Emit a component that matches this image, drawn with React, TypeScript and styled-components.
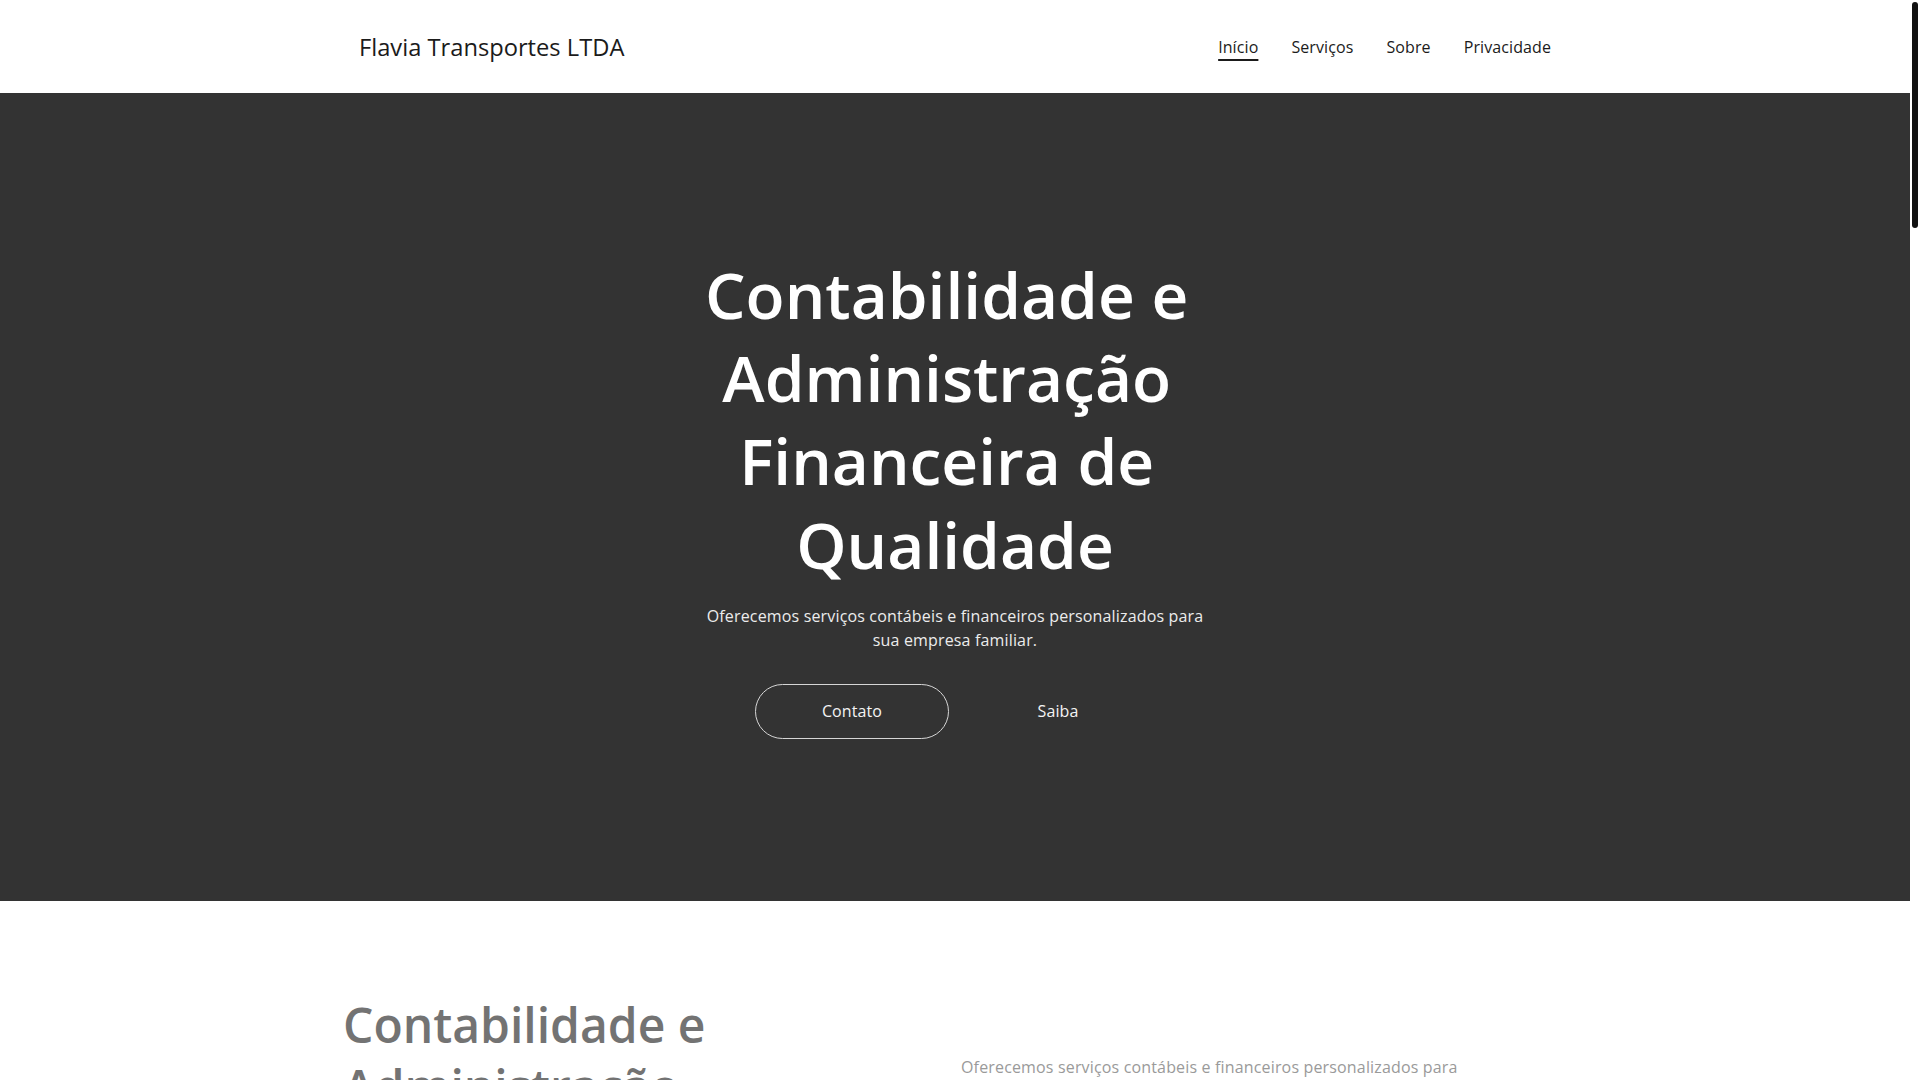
import React from "react";
import styled, { createGlobalStyle } from "styled-components";

const GlobalStyle = createGlobalStyle`
  *, *::before, *::after { box-sizing: border-box; }
  html, body { height: 100%; overflow: hidden; }
  body {
    margin: 0;
    background: #ffffff;
    color: #1b1b1b;
    font-family: "Open Sans", "Noto Sans", "Liberation Sans", sans-serif;
  }
  h1, h2, h3, p { margin: 0; }
`;

const Shell = styled.div`
  height: 100vh;
  display: flex;
`;

const Viewport = styled.div`
  flex: 1;
  min-width: 0;
  overflow-y: auto;
  background: #ffffff;
  scrollbar-width: none;
  &::-webkit-scrollbar { display: none; }
`;

const ScrollRail = styled.div`
  width: 10px;
  flex: none;
  padding: 2px;
  background: #ffffff;
`;

const ScrollThumb = styled.div`
  width: 6px;
  height: 226px;
  border-radius: 3px;
  background: #111111;
`;

const Page = styled.div`
  min-height: 5071px;
  display: flex;
  flex-direction: column;
`;

const Container = styled.div`
  width: 1224px;
  margin: 0 auto;
`;

const Header = styled.header`
  height: 93px;
  background: #ffffff;
`;

const HeaderInner = styled(Container)`
  height: 100%;
  padding: 0 16px;
  display: flex;
  align-items: center;
  justify-content: space-between;
`;

const Logo = styled.a`
  font-size: 23.7px;
  font-weight: 400;
  color: #1b1b1b;
  text-decoration: none;
`;

const Nav = styled.nav`
  display: flex;
  gap: 33px;
`;

const NavLink = styled.a<{ $active?: boolean }>`
  font-size: 16px;
  color: #1b1b1b;
  text-decoration: ${(p) => (p.$active ? "underline" : "none")};
  text-decoration-thickness: 2px;
  text-underline-offset: 6px;
  letter-spacing: 0.1px;
`;

const Hero = styled.section`
  background: #333333;
  padding: 160px 0 162px;
  display: flex;
  flex-direction: column;
  align-items: center;
`;

const HeroTitle = styled.h1`
  max-width: 520px;
  font-size: 64px;
  line-height: 1.3;
  font-weight: 600;
  color: #ffffff;
  text-align: center;
  white-space: break-spaces;
`;

const HeroText = styled.p`
  max-width: 520px;
  margin-top: 18px;
  font-size: 16px;
  line-height: 24px;
  letter-spacing: 0.16px;
  color: #ececec;
  text-align: center;
`;

const ButtonRow = styled.div`
  margin-top: 32px;
  display: flex;
  gap: 12px;
`;

const Button = styled.a<{ $outline?: boolean }>`
  width: 194px;
  height: 55px;
  display: flex;
  align-items: center;
  justify-content: center;
  border-radius: 28px;
  border: 1px solid ${(p) => (p.$outline ? "#d6d6d6" : "transparent")};
  color: #f4f4f4;
  font-size: 16px;
  letter-spacing: 0.1px;
  text-decoration: none;
`;

const Intro = styled.section`
  padding: 93px 0 93px;
`;

const IntroGrid = styled(Container)`
  display: grid;
  grid-template-columns: 1fr 1fr;
  gap: 12px;
  align-items: start;
`;

const SectionTitle = styled.h2`
  max-width: 520px;
  font-size: 48px;
  line-height: 1.3;
  font-weight: 600;
  color: #737373;
`;

const IntroText = styled.p`
  max-width: 520px;
  margin-top: 61px;
  font-size: 16px;
  line-height: 24px;
  letter-spacing: 0.16px;
  color: #9a9a9a;
`;

const Block = styled.section<{ $tone?: "light" | "white" }>`
  padding: 110px 0;
  background: ${(p) => (p.$tone === "light" ? "#f5f5f5" : "#ffffff")};
`;

const BlockHeading = styled.h2`
  font-size: 40px;
  line-height: 1.3;
  font-weight: 600;
  color: #333333;
  text-align: center;
  margin-bottom: 56px;
`;

const CardGrid = styled(Container)`
  display: grid;
  grid-template-columns: repeat(3, 1fr);
  gap: 32px;
`;

const Card = styled.div`
  background: #ffffff;
  border: 1px solid #e4e4e4;
  border-radius: 8px;
  padding: 40px 32px;
  min-height: 280px;
`;

const CardTitle = styled.h3`
  font-size: 22px;
  font-weight: 600;
  color: #333333;
  margin-bottom: 16px;
`;

const CardText = styled.p`
  font-size: 16px;
  line-height: 26px;
  color: #6f6f6f;
`;

const Prose = styled(Container)`
  max-width: 820px;
  display: flex;
  flex-direction: column;
  gap: 24px;
`;

const ProseText = styled.p`
  font-size: 17px;
  line-height: 28px;
  color: #5c5c5c;
`;

const Footer = styled.footer`
  margin-top: auto;
  background: #333333;
  padding: 48px 0;
`;

const FooterInner = styled(Container)`
  padding: 0 16px;
  display: flex;
  justify-content: space-between;
  color: #cfcfcf;
  font-size: 15px;
`;

const services = [
  {
    title: "Contabilidade Empresarial",
    text: "Escrituração contábil, balanços e demonstrativos elaborados com precisão para manter sua empresa em dia.",
  },
  {
    title: "Gestão Financeira",
    text: "Planejamento de fluxo de caixa, controle de custos e relatórios claros para decisões mais seguras.",
  },
  {
    title: "Consultoria Fiscal",
    text: "Apuração de impostos e orientação tributária para reduzir riscos e aproveitar oportunidades legais.",
  },
];

export default function App() {
  return (
    <>
      <GlobalStyle />
      <Shell>
        <Viewport>
          <Page>
            <Header>
              <HeaderInner>
                <Logo href="#">Flavia Transportes LTDA</Logo>
                <Nav>
                  <NavLink href="#" $active>
                    Início
                  </NavLink>
                  <NavLink href="#">Serviços</NavLink>
                  <NavLink href="#">Sobre</NavLink>
                  <NavLink href="#">Privacidade</NavLink>
                </Nav>
              </HeaderInner>
            </Header>

            <Hero>
              <HeroTitle>Contabilidade e Administração Financeira de Qualidade</HeroTitle>
              <HeroText>
                Oferecemos serviços contábeis e financeiros personalizados para sua empresa familiar.
              </HeroText>
              <ButtonRow>
                <Button href="#" $outline>
                  Contato
                </Button>
                <Button href="#">Saiba</Button>
              </ButtonRow>
            </Hero>

            <Intro>
              <IntroGrid>
                <SectionTitle>Contabilidade e Administração Financeira de Qualidade</SectionTitle>
                <IntroText>
                  Oferecemos serviços contábeis e financeiros personalizados para sua empresa familiar.
                </IntroText>
              </IntroGrid>
            </Intro>

            <Block $tone="light">
              <BlockHeading>Serviços</BlockHeading>
              <CardGrid>
                {services.map((s) => (
                  <Card key={s.title}>
                    <CardTitle>{s.title}</CardTitle>
                    <CardText>{s.text}</CardText>
                  </Card>
                ))}
              </CardGrid>
            </Block>

            <Block>
              <BlockHeading>Sobre</BlockHeading>
              <Prose>
                <ProseText>
                  A Flavia Transportes LTDA atua com dedicação no atendimento a empresas familiares,
                  oferecendo soluções contábeis e financeiras sob medida.
                </ProseText>
                <ProseText>
                  Nosso compromisso é a transparência, a organização e a confiança em cada etapa do
                  trabalho.
                </ProseText>
              </Prose>
            </Block>

            <Block $tone="light">
              <BlockHeading>Privacidade</BlockHeading>
              <Prose>
                <ProseText>
                  Respeitamos a sua privacidade. Os dados fornecidos são utilizados apenas para o
                  atendimento e nunca são compartilhados com terceiros sem autorização.
                </ProseText>
              </Prose>
            </Block>

            <Footer>
              <FooterInner>
                <span>Flavia Transportes LTDA</span>
                <span>© 2024 Todos os direitos reservados.</span>
              </FooterInner>
            </Footer>
          </Page>
        </Viewport>
        <ScrollRail aria-hidden="true">
          <ScrollThumb />
        </ScrollRail>
      </Shell>
    </>
  );
}
